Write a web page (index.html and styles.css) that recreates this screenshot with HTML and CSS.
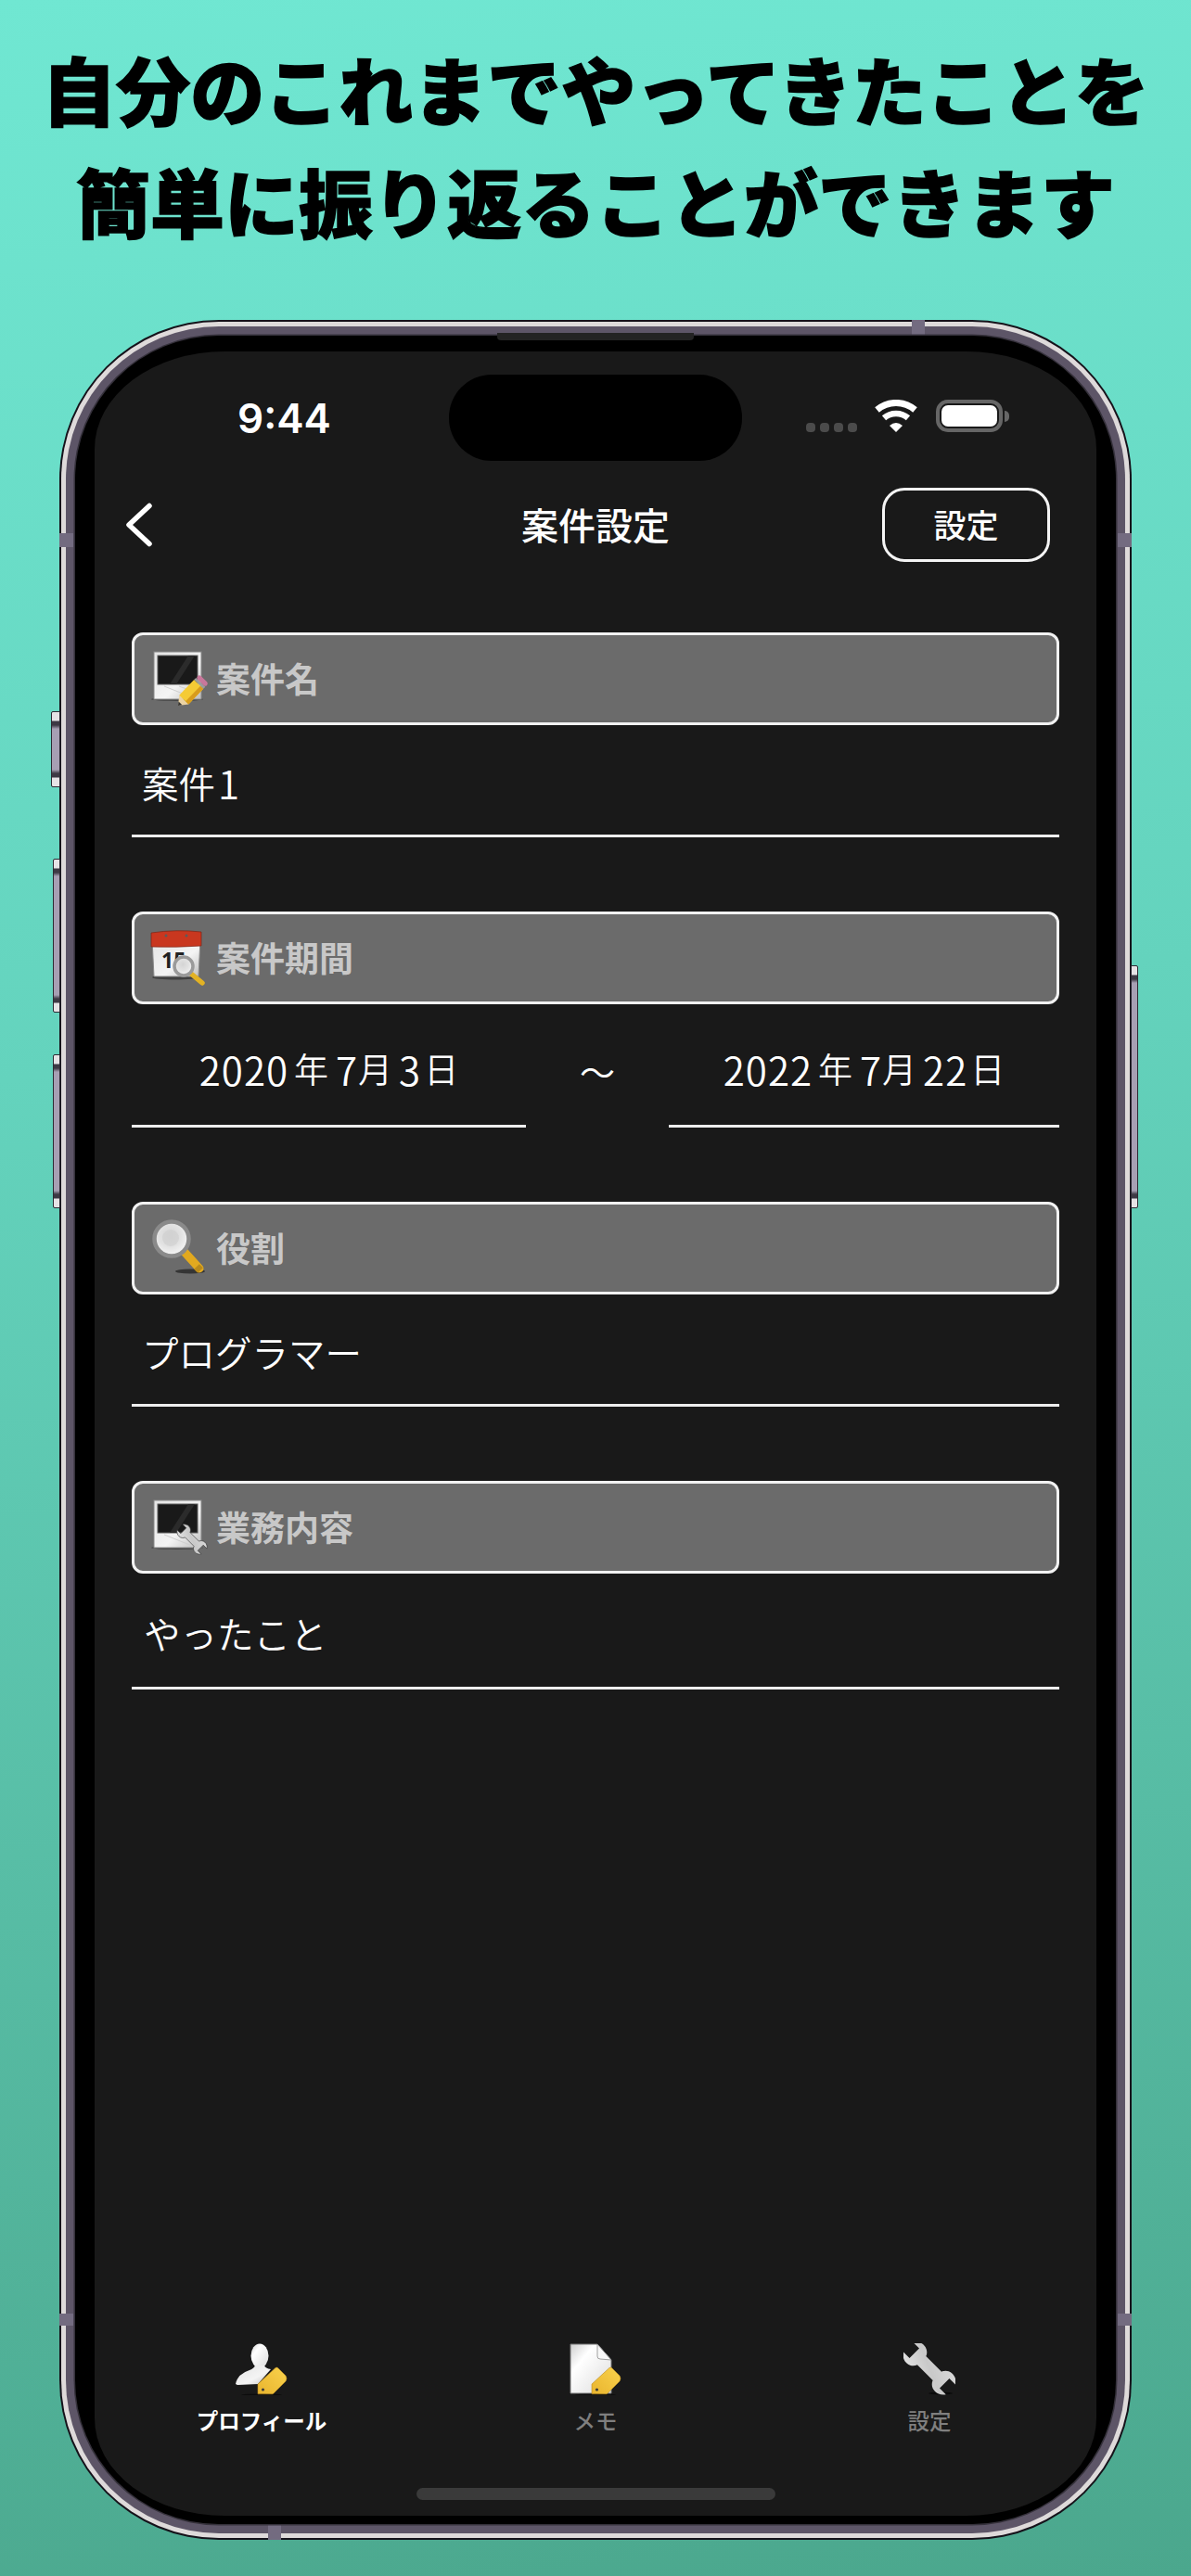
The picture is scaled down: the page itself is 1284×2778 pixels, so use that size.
FILE: index.html
```html
<!DOCTYPE html>
<html lang="ja">
<head>
<meta charset="utf-8">
<title>案件設定</title>
<link rel="stylesheet" href="styles.css">
</head>
<body>
<svg class="defs" width="0" height="0" aria-hidden="true">
  <defs>
    <linearGradient id="paper" x1="0" y1="0" x2="1" y2="1"><stop offset="0" stop-color="#e4e4e4"/><stop offset="0.6" stop-color="#f4f4f4"/><stop offset="1" stop-color="#bdbdbd"/></linearGradient>
    <linearGradient id="sheet" x1="0" y1="0" x2="1" y2="1"><stop offset="0" stop-color="#cfcfcf"/><stop offset="0.3" stop-color="#fff"/><stop offset="1" stop-color="#dcdcdc"/></linearGradient>
    <linearGradient id="steel" x1="0" y1="0" x2="1" y2="1"><stop offset="0" stop-color="#e4e4e4"/><stop offset="0.5" stop-color="#c9c9c9"/><stop offset="1" stop-color="#d9d9d9"/></linearGradient>
    <linearGradient id="tagfill" x1="0" y1="1" x2="1" y2="0"><stop offset="0" stop-color="#e8b42e"/><stop offset="1" stop-color="#fad24c"/></linearGradient>
    <radialGradient id="lens" cx="0.45" cy="0.4" r="0.6"><stop offset="0" stop-color="#d4d4d4"/><stop offset="0.55" stop-color="#e2e2e2"/><stop offset="1" stop-color="#f6f6f6"/></radialGradient>
    <path id="wrench" d="M-9,-16 L-9,16 C-20,20 -22,36 -10,44 L-10,31 L10,31 L10,44 C22,36 20,20 9,16 L9,-16 C20,-20 22,-36 10,-44 L10,-31 L-10,-31 L-10,-44 C-22,-36 -20,-20 -9,-16 Z"/>
    <g id="photo">
      <ellipse cx="28" cy="52" rx="28" ry="2" fill="#000" opacity="0.35"/>
      <rect x="3" y="1" width="51" height="51" fill="url(#paper)" stroke="#8a8a8a"/>
      <path d="M14,38 L44,50 M30,38 L52,46" stroke="#cfcfcf" fill="none"/>
      <rect x="7" y="5" width="43" height="31" fill="#191919" stroke="#5a5a5a"/>
      <path d="M20,36 L40,5 L47,5 L27,36 Z" fill="#2b2b2b"/>
    </g>
    <g id="tag">
      <path d="M24,55 L24,44 L43,26.5 Q44.5,25.5 46,27 L54,35 Q56,38 54,41 L40,55 Z" fill="url(#tagfill)" stroke="#b98c22" stroke-width="0.6"/>
      <circle cx="29.5" cy="50" r="1.6" fill="#3d3d3d"/>
      <ellipse cx="28" cy="55.5" rx="22" ry="1" fill="#000" opacity="0.5"/>
    </g>
  </defs>
</svg>

<h1 class="headline">自分のこれまでやってきたことを<br>簡単に振り返ることができます</h1>

<div class="phone">
  <span class="side-btn silent"></span>
  <span class="side-btn vol-up"></span>
  <span class="side-btn vol-down"></span>
  <span class="side-btn power"></span>
  <span class="tick tick-top"></span>
  <span class="tick tick-bottom"></span>
  <span class="tick tick-lt"></span>
  <span class="tick tick-rt"></span>
  <span class="tick tick-lb"></span>
  <span class="tick tick-rb"></span>
  <div class="band-ivory">
    <div class="band-purple">
      <div class="bezel">
        <span class="speaker"></span>
        <main class="screen">
          <div class="status">
            <div class="time">9:44</div>
            <div class="island"></div>
            <div class="status-icons">
              <div class="dots"><i></i><i></i><i></i><i></i></div>
              <svg class="wifi" width="48" height="35" viewBox="0 0 48 35">
                <path d="M3.5,11 A31.5,31.5 0 0 1 44.5,11" fill="none" stroke="#fff" stroke-width="7"/>
                <path d="M11,19.8 A20,20 0 0 1 37,19.8" fill="none" stroke="#fff" stroke-width="6.5"/>
                <path d="M24,35 L17,28 Q24,22 31,28 Z" fill="#fff"/>
              </svg>
              <div class="battery"><span class="battery-fill"></span><span class="battery-nub"></span></div>
            </div>
          </div>

          <nav class="nav">
            <svg class="back" width="30" height="48" viewBox="0 0 30 48">
              <path d="M26,3.5 L4,24 L26,44.5" fill="none" stroke="#fff" stroke-width="5.5" stroke-linecap="round" stroke-linejoin="round"/>
            </svg>
            <div class="nav-title">案件設定</div>
            <div class="nav-action"><button class="nav-btn">設定</button></div>
          </nav>

          <div class="form">
            <section>
              <div class="field-head">
                <svg class="field-icon" width="60" height="60" viewBox="0 0 60 60">
                  <use href="#photo"/>
                  <g transform="translate(29,59) rotate(-46)">
                    <polygon points="0,0 9,-7 9,7" fill="#ecd3a4"/>
                    <polygon points="0,0 3.5,-2.7 3.5,2.7" fill="#333"/>
                    <rect x="9" y="-7" width="23" height="14" fill="#f5cb35"/>
                    <rect x="9" y="2.5" width="23" height="4.5" fill="#d89c1c"/>
                    <rect x="32" y="-7" width="3" height="14" fill="#9c9c9c"/>
                    <rect x="35" y="-7" width="5" height="14" rx="2.5" fill="#c9779b"/>
                  </g>
                </svg>
                <span class="field-label">案件名</span>
              </div>
              <div class="field-value">案件<span class="num single">1</span></div>
            </section>

            <section>
              <div class="field-head">
                <svg class="field-icon" width="60" height="60" viewBox="0 0 60 60">
                  <ellipse cx="26" cy="51" rx="25" ry="2.5" fill="#000" opacity="0.4"/>
                  <path d="M1,10 L53,10 L51,50 L3,50 Z" fill="url(#paper)" stroke="#8a8a8a"/>
                  <path d="M0,3 Q27,-1 54,2 L54,17 Q27,19 0,18 Z" fill="#c9371f" stroke="#7c2415" stroke-width="0.7"/>
                  <circle cx="16" cy="6" r="1.5" fill="#5b5b5b"/>
                  <circle cx="38" cy="6" r="1.5" fill="#5b5b5b"/>
                  <text class="cal-num" x="11" y="41">15</text>
                  <path d="M43,47 L55,57" stroke="#e2b224" stroke-width="5.5" stroke-linecap="round"/>
                  <circle cx="35" cy="39" r="10" fill="url(#lens)" stroke="#9a9a9a" stroke-width="3.5"/>
                </svg>
                <span class="field-label">案件期間</span>
              </div>
              <div class="date-row">
                <div class="date"><span class="num">2020</span><span class="after-num">年</span><span class="num after-year">7</span>月<span class="num after-month">3</span><span class="day">日</span></div>
                <div class="tilde">〜</div>
                <div class="date"><span class="num">2022</span><span class="after-num">年</span><span class="num after-year">7</span>月<span class="num after-month">22</span><span class="day">日</span></div>
              </div>
            </section>

            <section>
              <div class="field-head">
                <svg class="field-icon" width="60" height="60" viewBox="0 0 60 60">
                  <ellipse cx="42" cy="55" rx="16" ry="2.5" fill="#000" opacity="0.5"/>
                  <path d="M33,31 L52,52" stroke="#e2a91f" stroke-width="9" stroke-linecap="round"/>
                  <path d="M49,50 L53,54" stroke="#b98a1a" stroke-width="8"/>
                  <circle cx="22" cy="20" r="18.5" fill="url(#lens)" stroke="#8a8a8a" stroke-width="4.5"/>
                  <circle cx="21" cy="19" r="9" fill="#d0d0d0" opacity="0.7"/>
                </svg>
                <span class="field-label">役割</span>
              </div>
              <div class="field-value">プログラマー</div>
            </section>

            <section>
              <div class="field-head">
                <svg class="field-icon" width="60" height="60" viewBox="0 0 60 60">
                  <use href="#photo"/>
                  <use href="#wrench" transform="translate(44,43) rotate(-45) scale(0.42)" fill="url(#steel)" stroke="#3a3a3a" stroke-width="1.5"/>
                </svg>
                <span class="field-label">業務内容</span>
              </div>
              <div class="field-value tall">やったこと</div>
            </section>
          </div>

          <footer class="tabbar">
            <div class="tabs">
              <div class="tab active">
                <svg class="tab-icon" width="56" height="56" viewBox="0 0 56 56">
                  <ellipse cx="26" cy="13.5" rx="9.5" ry="13" fill="url(#sheet)"/>
                  <path d="M0,44 Q2,33 15,29 Q20,27 21,24 L31,24 Q32,27 38,28 L24,44 L2,45 Z" fill="url(#paper)"/>
                  <use href="#tag"/>
                </svg>
                <span class="tab-label">プロフィール</span>
              </div>
              <div class="tab">
                <svg class="tab-icon" width="56" height="56" viewBox="0 0 56 56">
                  <path d="M1,1 L30,1 L45,18 L45,54 L1,54 Z" fill="url(#sheet)" stroke="#777"/>
                  <path d="M30,1 L30,14 Q30,17 33,17 L45,18 Z" fill="#f8f8f8" stroke="#8a8a8a" stroke-width="0.8"/>
                  <use href="#tag"/>
                </svg>
                <span class="tab-label">メモ</span>
              </div>
              <div class="tab">
                <svg class="tab-icon" width="56" height="56" viewBox="0 0 56 56">
                  <ellipse cx="40" cy="54" rx="13" ry="1.5" fill="#000" opacity="0.6"/>
                  <use href="#wrench" transform="translate(28,27) rotate(-45) scale(0.74)" fill="url(#steel)"/>
                </svg>
                <span class="tab-label">設定</span>
              </div>
            </div>
            <div class="home-bar"></div>
          </footer>
        </main>
      </div>
    </div>
  </div>
</div>
</body>
</html>
```

FILE: styles.css
```css
* { box-sizing: border-box; }

html, body { margin: 0; padding: 0; }

body {
  width: 1284px;
  height: 2778px;
  overflow: hidden;
  display: flex;
  flex-direction: column;
  align-items: center;
  background: linear-gradient(174deg, #70e7d2 0%, #64d3bd 40%, #4ba78d 100%);
  font-family: "Noto Sans CJK JP", "Noto Sans", sans-serif;
  color: #fff;
}

.defs { position: absolute; }

.headline {
  margin: 0;
  padding-top: 34px;
  height: 280px;
  font-size: 80px;
  line-height: 121px;
  font-weight: 900;
  color: #000;
  text-align: center;
  white-space: nowrap;
  -webkit-text-stroke: 1.5px #000;
}

/* device frame */
.phone {
  position: relative;
  flex: none;
  width: 1156px;
  height: 2394px;
  margin-top: 65px;
  padding: 2px;
  border-radius: 172px;
  background: #15121a;
}
.band-ivory {
  height: 100%;
  padding: 5px;
  border-radius: 170px;
  background: #dedada;
}
.band-purple {
  height: 100%;
  padding: 10px;
  border-radius: 165px;
  background: #5d5567;
}
.bezel {
  position: relative;
  height: 100%;
  padding: 17px 21px 9px;
  border-radius: 155px;
  background: #000;
  box-shadow: 0 0 0 1.5px #35313b;
}
.speaker {
  position: absolute;
  top: -3px;
  left: 455px;
  width: 212px;
  height: 8px;
  border-radius: 0 0 4px 4px;
  background: #232323;
}

.tick { position: absolute; background: #736b80; }
.tick-top { top: 0; left: 919px; width: 14px; height: 16px; }
.tick-bottom { bottom: 0; left: 225px; width: 14px; height: 16px; }
.tick-lt { top: 230px; left: 0; width: 15px; height: 15px; }
.tick-rt { top: 230px; right: 0; width: 15px; height: 15px; }
.tick-lb { bottom: 231px; left: 0; width: 15px; height: 13px; }
.tick-rb { bottom: 231px; right: 0; width: 15px; height: 13px; }

.side-btn {
  position: absolute;
  width: 8px;
  border: 1.5px solid #2d2a33;
  border-radius: 2px 0 0 2px;
  background: linear-gradient(180deg, #e6e3e6 0, #e6e3e6 9px, #3d3944 10px, #3d3944 14px, #a79fb3 18px, #a79fb3 calc(100% - 18px), #3d3944 calc(100% - 14px), #3d3944 calc(100% - 10px), #e6e3e6 calc(100% - 9px));
}
.silent { left: -9px; top: 422px; width: 10px; height: 82px; }
.vol-up { left: -7px; top: 581px; height: 166px; }
.vol-down { left: -7px; top: 792px; height: 166px; }
.power { right: -7px; top: 696px; height: 262px; border-radius: 0 2px 2px 0; }

/* screen */
.screen {
  display: flex;
  flex-direction: column;
  height: 100%;
  border-radius: 140px / 105px;
  background: #191919;
  overflow: hidden;
}

.status {
  flex: none;
  display: grid;
  grid-template-columns: 1fr 316px 1fr;
  align-items: center;
  padding-top: 25px;
}
.time {
  padding-left: 154px;
  font-family: Inter, "Noto Sans", sans-serif;
  font-size: 44px;
  line-height: 54px;
  font-weight: 600;
}
.island {
  height: 93px;
  border-radius: 46px;
  background: #000;
}
.status-icons {
  display: flex;
  align-items: flex-start;
  height: 35px;
  margin-top: -4px;
  padding-left: 69px;
}
.dots {
  display: flex;
  gap: 5px;
  align-self: flex-end;
}
.dots i {
  width: 10px;
  height: 10px;
  border-radius: 4px;
  background: #4b4b4b;
}
.wifi { flex: none; margin-left: 18px; }
.battery {
  position: relative;
  flex: none;
  width: 72px;
  height: 35px;
  margin-left: 19px;
  padding: 2px;
  border: 4px solid #666;
  border-radius: 13px;
}
.battery-fill {
  display: block;
  height: 100%;
  border-radius: 7px;
  background: #fff;
}
.battery-nub {
  position: absolute;
  top: 8px;
  right: -11px;
  width: 5px;
  height: 12px;
  border-radius: 0 6px 6px 0;
  background: #666;
}

.nav {
  flex: none;
  display: grid;
  grid-template-columns: 1fr auto 1fr;
  align-items: center;
  height: 80px;
  margin-top: 29px;
  padding: 0 50px;
}
.back { display: block; margin-left: -17px; }
.nav-title {
  padding-bottom: 3px;
  font-size: 40px;
  line-height: 50px;
  font-weight: 500;
}
.nav-action { display: flex; justify-content: flex-end; }
.nav-btn {
  width: 181px;
  height: 80px;
  padding: 0 0 3px;
  border: 3px solid #f4f4f4;
  border-radius: 24px;
  background: transparent;
  color: #fff;
  font-family: inherit;
  font-size: 35px;
  font-weight: 500;
}

.form {
  flex: none;
  display: flex;
  flex-direction: column;
  gap: 80px;
  margin-top: 76px;
  padding: 0 40px;
}
.field-head {
  display: flex;
  align-items: center;
  gap: 10px;
  height: 100px;
  padding-left: 18px;
  border: 3px solid #f2f2f2;
  border-radius: 12px;
  background: #6b6b6b;
}
.field-icon { flex: none; overflow: visible; }
.field-label {
  padding-bottom: 3px;
  font-size: 37px;
  line-height: 50px;
  font-weight: 700;
  color: #c8c8c8;
}
.field-value {
  display: flex;
  align-items: center;
  height: 121px;
  padding: 5px 0 0 11px;
  border-bottom: 3px solid #eee;
  font-size: 39.5px;
  font-weight: 350;
}
.field-value.tall { height: 125px; padding-left: 13px; }

.num { font-size: 42px; letter-spacing: 1px; font-weight: 350; }
.num.single { margin-left: 3px; }
.after-num { margin-left: 6px; }
.after-year { margin-left: 8px; }
.after-month { margin-left: 7px; }
.day { margin-left: 3px; }

.date-row {
  display: grid;
  grid-template-columns: 425px 1fr 421px;
  height: 133px;
}
.date {
  display: flex;
  align-items: center;
  justify-content: center;
  padding-top: 8px;
  border-bottom: 3px solid #eee;
  font-size: 37px;
  font-weight: 350;
}
.tilde {
  display: flex;
  align-items: center;
  justify-content: center;
  padding-top: 12px;
  padding-bottom: 3px;
  font-size: 38px;
  font-weight: 350;
}

.tabbar {
  margin-top: auto;
  padding-bottom: 17px;
}
.tabs {
  display: grid;
  grid-template-columns: repeat(3, 1fr);
}
.tab {
  display: flex;
  flex-direction: column;
  align-items: center;
  color: #7f7f7f;
}
.tab.active { color: #fff; }
.tab-icon { display: block; margin-bottom: 12px; }
.tab-label {
  font-size: 23.5px;
  line-height: 30px;
  font-weight: 700;
}
.tab:not(.active) .tab-label { font-weight: 500; }
.home-bar {
  width: 387px;
  height: 13px;
  margin: 58px auto 0;
  border-radius: 7px;
  background: #3a3a3a;
}

.cal-num {
  font-family: "Noto Sans", sans-serif;
  font-size: 23px;
  font-weight: 700;
  fill: #222;
}
```
